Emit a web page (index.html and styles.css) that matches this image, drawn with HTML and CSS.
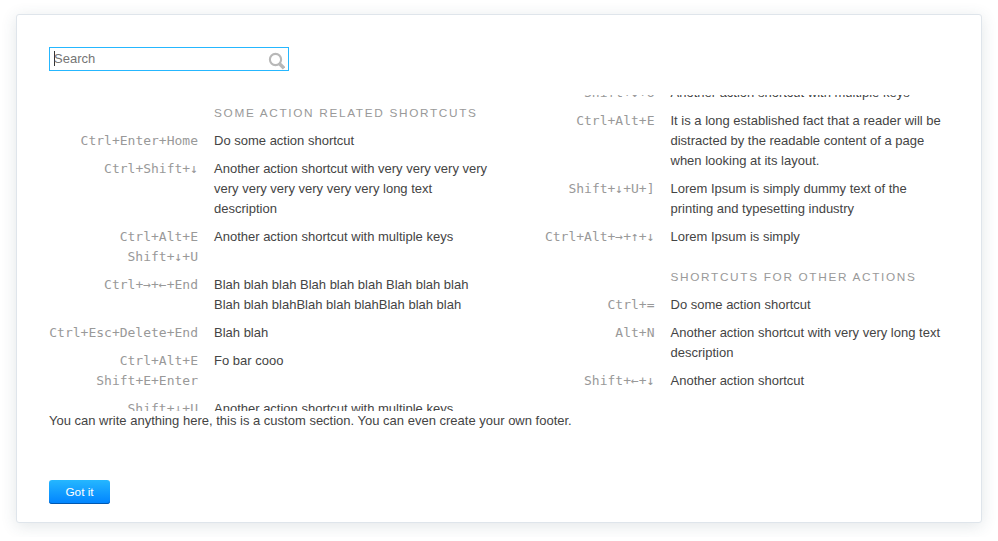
FILE: index.html
```
<!DOCTYPE html>
<html lang="en">
<head>
<meta charset="utf-8">
<title>Keyboard shortcuts</title>
<link rel="stylesheet" href="styles.css">
</head>
<body>
<main class="dialog">
  <div class="search">
    <span class="caret"></span>
    <span class="placeholder">Search</span>
    <svg class="glass" width="17" height="18" viewBox="0 0 17 18"><circle cx="7.5" cy="7.5" r="5.6" fill="none" stroke="#b8b8b8" stroke-width="2.1"/><path d="M11 11.2L16 16.2" stroke="#b8b8b8" stroke-width="3.4"/></svg>
  </div>
  <div class="columns">
    <div class="column">
      <h2 class="title">Some action related shortcuts</h2>
      <dl class="list">
        <dt>Ctrl+Enter+Home</dt><dd>Do some action shortcut</dd>
        <dt>Ctrl+Shift+↓</dt><dd>Another action shortcut with very very very very very very very very very very long text description</dd>
        <dt>Ctrl+Alt+E<br>Shift+↓+U</dt><dd>Another action shortcut with multiple keys</dd>
        <dt>Ctrl+→+←+End</dt><dd>Blah blah blah Blah blah blah Blah blah blah Blah blah blahBlah blah blahBlah blah blah</dd>
        <dt>Ctrl+Esc+Delete+End</dt><dd>Blah blah</dd>
        <dt>Ctrl+Alt+E<br>Shift+E+Enter</dt><dd>Fo bar cooo</dd>
        <dt>Shift+↓+U</dt><dd>Another action shortcut with multiple keys</dd>
      </dl>
    </div>
    <div class="column">
      <dl class="list continued">
        <dt>Shift+↓+U</dt><dd>Another action shortcut with multiple keys</dd>
        <dt>Ctrl+Alt+E</dt><dd>It is a long established fact that a reader will be distracted by the readable content of a page when looking at its layout.</dd>
        <dt>Shift+↓+U+]</dt><dd>Lorem Ipsum is simply dummy text of the printing and typesetting industry</dd>
        <dt>Ctrl+Alt+→+↑+↓</dt><dd>Lorem Ipsum is simply</dd>
      </dl>
      <h2 class="title">Shortcuts for other actions</h2>
      <dl class="list">
        <dt>Ctrl+=</dt><dd>Do some action shortcut</dd>
        <dt>Alt+N</dt><dd>Another action shortcut with very very long text description</dd>
        <dt>Shift+←+↓</dt><dd>Another action shortcut</dd>
      </dl>
    </div>
  </div>
  <p class="note">You can write anything here, this is a custom section. You can even create your own footer.</p>
  <button class="button" type="button">Got it</button>
</main>
</body>
</html>
```

FILE: styles.css
```
* { box-sizing: border-box; }

body {
  margin: 0;
  background: #fff;
  color: #444;
  font: 13px/20px "Liberation Sans", Arial, sans-serif;
}

.dialog {
  width: 966px;
  height: 509px;
  margin: 14px 16px;
  padding: 32px;
  border: 1px solid #dfe5eb;
  border-radius: 3px;
  background: #fff;
  box-shadow: 0 3px 16px rgba(50, 75, 95, 0.14);
}

.search {
  display: flex;
  align-items: center;
  width: 240px;
  height: 24px;
  margin-bottom: 24px;
  padding: 0 3px 0 4px;
  border: 1px solid #25b7ff;
}

.caret {
  width: 1px;
  height: 15px;
  margin: 0 -1px 1px 0;
  background: #333;
}

.placeholder { color: #757575; }

.glass {
  margin: 4px 0 0 auto;
}

.columns {
  display: grid;
  grid-template-columns: 1fr 1fr;
  gap: 13px;
  height: 316px;
}

.column {
  height: 316px;
  overflow: hidden;
}

.title {
  margin: 0;
  padding: 8px 0 0 165px;
  color: #999;
  font-size: 11.8px;
  font-weight: 400;
  letter-spacing: 1.67px;
  text-transform: uppercase;
  white-space: nowrap;
}

.list {
  display: grid;
  grid-template-columns: 149px 1fr;
  gap: 8px 16px;
  margin: 0;
  padding: 8px 0 12px;
}

.continued { margin-top: -20px; }

dt {
  color: #999;
  font-family: "DejaVu Sans Mono", monospace;
  text-align: right;
  white-space: nowrap;
}

dd { margin: 0; }

.note { margin: 0; }

.button {
  display: block;
  width: 61px;
  height: 24px;
  margin-top: 49px;
  padding: 0;
  border: 0;
  border-radius: 3px;
  background: linear-gradient(#25b7ff, #0083ff);
  box-shadow: inset 0 -1px 0 #0058b0;
  color: #fff;
  font: 11.8px/24px "Liberation Sans", Arial, sans-serif;
}
```
